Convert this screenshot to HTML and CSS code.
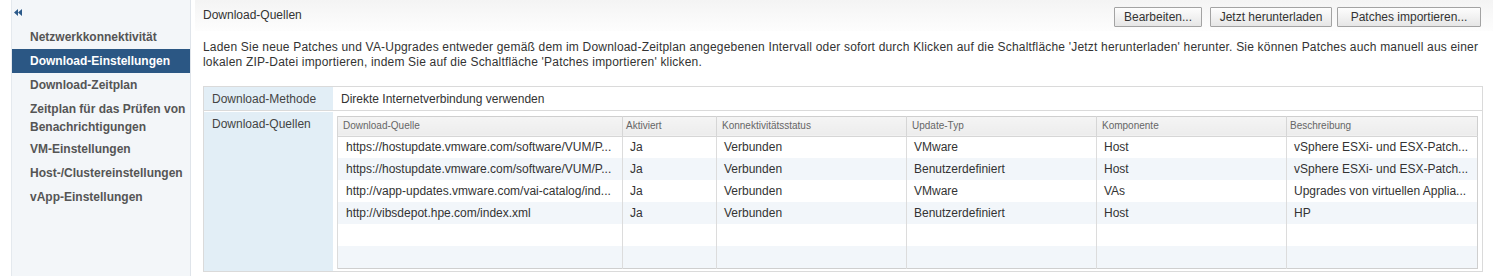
FILE: index.html
```html
<!DOCTYPE html>
<html lang="de">
<head>
<meta charset="utf-8">
<title>Download-Einstellungen</title>
<link rel="stylesheet" href="styles.css">
</head>
<body>
<div class="app">
  <nav class="sidebar">
    <div class="collapse">
      <svg width="8" height="7" viewBox="0 0 8 7"><path d="M4 0 L0 3.5 L4 7 Z M8 0 L4 3.5 L8 7 Z" fill="#2b5a8a"/></svg>
    </div>
    <ul class="menu">
      <li class="item">Netzwerkkonnektivität</li>
      <li class="item active">Download-Einstellungen</li>
      <li class="item">Download-Zeitplan</li>
      <li class="item wrap">Zeitplan für das Prüfen von Benachrichtigungen</li>
      <li class="item">VM-Einstellungen</li>
      <li class="item">Host-/Clustereinstellungen</li>
      <li class="item">vApp-Einstellungen</li>
    </ul>
  </nav>
  <main class="main">
    <header class="topbar">
      <div class="title">Download-Quellen</div>
      <div class="actions">
        <button class="btn btn-edit">Bearbeiten...</button>
        <button class="btn btn-now">Jetzt herunterladen</button>
        <button class="btn btn-import">Patches importieren...</button>
      </div>
    </header>
    <section class="content">
      <p class="desc">Laden Sie neue Patches und VA-Upgrades entweder gemäß dem im Download-Zeitplan angegebenen Intervall oder sofort durch Klicken auf die Schaltfläche 'Jetzt herunterladen' herunter. Sie können Patches auch manuell aus einer lokalen ZIP-Datei importieren, indem Sie auf die Schaltfläche 'Patches importieren' klicken.</p>
      <div class="props">
        <div class="label row1">Download-Methode</div>
        <div class="value row1">Direkte Internetverbindung verwenden</div>
        <div class="label">Download-Quellen</div>
        <div class="value grid-cell">
          <table class="grid">
            <colgroup>
              <col class="c1"><col class="c2"><col class="c3"><col class="c4"><col class="c5"><col class="c6">
            </colgroup>
            <thead>
              <tr><th>Download-Quelle</th><th class="narrow">Aktiviert</th><th>Konnektivitätsstatus</th><th>Update-Typ</th><th>Komponente</th><th class="narrow">Beschreibung</th></tr>
            </thead>
            <tbody>
              <tr><td class="first">https://hostupdate.vmware.com/software/VUM/P...</td><td>Ja</td><td>Verbunden</td><td>VMware</td><td>Host</td><td>vSphere ESXi- und ESX-Patch...</td></tr>
              <tr class="alt"><td class="first">https://hostupdate.vmware.com/software/VUM/P...</td><td>Ja</td><td>Verbunden</td><td>Benutzerdefiniert</td><td>Host</td><td>vSphere ESXi- und ESX-Patch...</td></tr>
              <tr><td class="first">http://vapp-updates.vmware.com/vai-catalog/ind...</td><td>Ja</td><td>Verbunden</td><td>VMware</td><td>VAs</td><td>Upgrades von virtuellen Applia...</td></tr>
              <tr class="alt"><td class="first">http://vibsdepot.hpe.com/index.xml</td><td>Ja</td><td>Verbunden</td><td>Benutzerdefiniert</td><td>Host</td><td>HP</td></tr>
              <tr><td class="first"></td><td></td><td></td><td></td><td></td><td></td></tr>
              <tr class="alt"><td class="first"></td><td></td><td></td><td></td><td></td><td></td></tr>
            </tbody>
          </table>
        </div>
      </div>
    </section>
  </main>
</div>
</body>
</html>
```
FILE: styles.css
```css
* { box-sizing: border-box; }
html, body { margin: 0; padding: 0; background: #fff; }
body {
  font-family: "Liberation Sans", Arial, sans-serif;
  font-size: 12px;
  color: #333;
  width: 1493px;
  height: 276px;
  overflow: hidden;
}
.app { display: flex; height: 276px; }

.sidebar {
  margin-left: 11px;
  width: 180px;
  flex: none;
  background: #f3f6f9;
  border-left: 1px solid #e4e9ee;
  border-right: 1px solid #dfe4ea;
  height: 276px;
}
.collapse { height: 25px; padding: 9px 0 0 2px; }
.collapse svg { display: block; }
.menu { list-style: none; margin: 0; padding: 0; }
.item {
  font-weight: bold;
  color: #555;
  line-height: 18px;
  padding: 3px 4px 3px 18px;
}
.item.wrap { padding-bottom: 1px; }
.item.active { background: #2b5784; color: #fff; }

.main { flex: 1; margin-left: 4px; min-width: 0; }
.topbar {
  height: 31px;
  display: flex;
  align-items: center;
  justify-content: space-between;
  padding: 0 12px 0 8px;
  background: linear-gradient(to bottom, #f4f4f4, #fdfdfd);
}
.title { color: #333; font-size: 12px; margin-top: -2px; }
.actions { display: flex; align-items: center; margin-top: 3px; }
.btn {
  height: 20px;
  font-family: inherit;
  font-size: 12px;
  color: #333;
  border: 1px solid #a3a3a3;
  border-radius: 1px;
  background: linear-gradient(to bottom, #fdfdfd, #e6e6e6);
  padding: 0;
  text-align: center;
}
.btn-edit { width: 88px; }
.btn-now { width: 122px; margin-left: 8px; }
.btn-import { width: 144px; margin-left: 5px; }

.content { padding: 0 10px 0 8px; }
.desc { margin: 9px 0 16px; line-height: 15px; color: #333; letter-spacing: 0.19px; }

.props {
  display: grid;
  grid-template-columns: 129px 1fr;
  border: 1px solid #dadada;
  height: 186px;
}
.label {
  background: #e2eef6;
  color: #444;
  padding: 5px 8px;
  line-height: 14px;
}
.value { background: #fff; padding: 5px 8px; line-height: 14px; color: #333; }
.row1 { border-bottom: 1px solid #dadada; height: 24px; }
.grid-cell { padding: 4px 4px 2px 4px; }

.grid {
  width: 100%;
  table-layout: fixed;
  border-collapse: collapse;
  border: 1px solid #cfcfcf;
}
.c1 { width: 285px; }
.c2 { width: 94px; }
.c3 { width: 190px; }
.c4 { width: 190px; }
.c5 { width: 190px; }
.c6 { width: auto; }
.grid th {
  font-weight: normal;
  font-size: 10px;
  color: #666;
  text-align: left;
  height: 20px;
  padding: 0 5px;
  background: linear-gradient(to bottom, #f5f5f5, #ececec);
  border-left: 1px solid #d6d6d6;
  border-bottom: 1px solid #d6d6d6;
  white-space: nowrap;
  overflow: hidden;
}
.grid th.narrow { padding-left: 3px; }
.grid td {
  height: 22px;
  padding: 0 7px;
  border-left: 1px solid #dcdcdc;
  white-space: nowrap;
  overflow: hidden;
  color: #333;
}
.grid td.first { padding-left: 8px; }
.grid tr.alt td { background: #f2f6fa; }
```
